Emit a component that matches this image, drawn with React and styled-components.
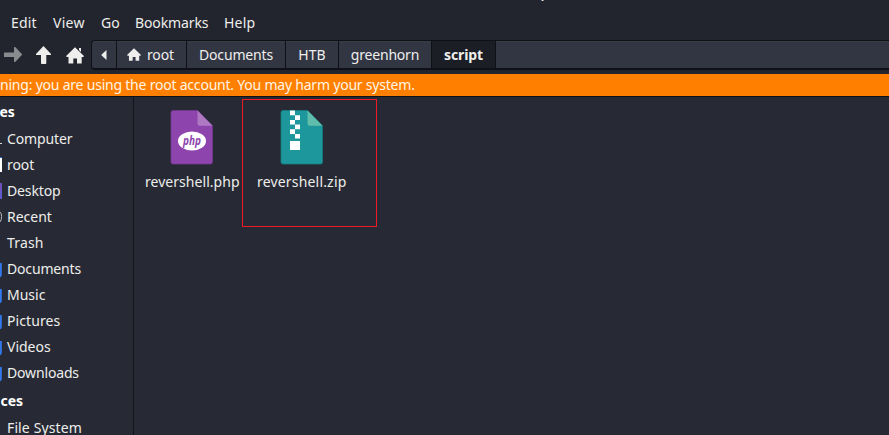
import React from "react";
import styled, { createGlobalStyle } from "styled-components";

const Global = createGlobalStyle`
  * { box-sizing: border-box; }
  html, body { margin: 0; background: #272a34; overflow: hidden; }
  body { font: 14px/20px "Noto Sans", "Open Sans", sans-serif; color: #eeeeec; }
`;

const Window = styled.div`
  width: 889px;
  height: 435px;
  display: flex;
  flex-direction: column;
  overflow: hidden;
  background: #272a34;
  white-space: nowrap;
`;

const TitleBar = styled.header`
  height: 3px;
  flex: none;
  padding-left: 541px;
  background: #23252e;
`;
const TitleTip = styled.span`
  display: block;
  width: 3px;
  height: 1px;
  background: linear-gradient(90deg, #477ca8 33%, #eeeeec 33% 67%, #9d7958 67%);
`;

const MenuBar = styled.nav`
  height: 37px;
  flex: none;
  display: flex;
  padding: 10px 0 0 11px;
  background: #23252e;
`;
const MenuItem = styled.span`
  flex: none;
  width: ${(p) => p.$w}px;
  letter-spacing: ${(p) => p.$ls || 0}px;
`;

const Toolbar = styled.div`
  height: 34px;
  flex: none;
  display: flex;
  background: #23252e;
`;
const Tools = styled.div`
  width: 91px;
  flex: none;
  display: flex;
  align-items: flex-start;
  padding: 5px 0 0 3px;
  gap: 8px;
`;
const PathBar = styled.div`
  flex: 1;
  height: 30px;
  display: flex;
  border: 1px solid #0f1116;
  border-width: 1px 0 2px 1px;
  border-radius: 4px 0 0 4px;
  background: #323643;
  box-shadow: inset 0 1px #393d4a;
`;
const Crumb = styled.div`
  flex: none;
  width: ${(p) => p.$w}px;
  display: flex;
  align-items: center;
  justify-content: center;
  gap: 6px;
  padding-right: ${(p) => p.$pad || 0}px;
  border-right: 1px solid #0f1116;
  letter-spacing: ${(p) => p.$ls || 0}px;
  background: ${(p) => (p.$active ? "#1b1e25" : "transparent")};
  font-weight: ${(p) => (p.$active ? 700 : 400)};
`;

const Warning = styled.div`
  height: 23px;
  flex: none;
  padding-top: 1px;
  border-bottom: 1px solid #101218;
  background: #ff8000;
  color: #fff4e6;
`;
const WarningText = styled.span`
  letter-spacing: -0.215px;
`;

const Body = styled.div`
  flex: 1;
  min-height: 0;
  display: flex;
`;
const Sidebar = styled.aside`
  width: 134px;
  flex: none;
  overflow: hidden;
  border-right: 1px solid #121419;
`;
const Heading = styled.div`
  height: 29px;
  display: flex;
  align-items: center;
  font-weight: 700;
  color: #fff;
  text-indent: ${(p) => p.$x || 0}px;
`;
const Place = styled.div`
  height: 26px;
  display: flex;
  align-items: center;
`;
const PlaceIcon = styled.svg`
  width: 7px;
  height: 26px;
  flex: none;
`;
const PlaceLabel = styled.span`
  letter-spacing: ${(p) => p.$ls || 0}px;
`;

const Files = styled.main`
  flex: 1;
  display: flex;
  align-items: flex-start;
  padding: 2px 0 0 3px;
`;
const FileTile = styled.div`
  flex: none;
  width: ${(p) => p.$w}px;
  height: 128px;
  padding-top: 10px;
  display: flex;
  flex-direction: column;
  align-items: flex-start;
  border: 1px solid ${(p) => (p.$marked ? "#ec1c24" : "transparent")};
`;
const FileIcon = styled.svg`
  width: 44px;
  height: 56px;
  flex: none;
  margin-left: ${(p) => p.$x}px;
`;
const FileName = styled.span`
  margin: 6px 0 0 ${(p) => p.$x}px;
  letter-spacing: ${(p) => p.$ls || 0}px;
`;

const Arrow = ({ up }) => (
  <svg width="22" height="22" viewBox="0 0 22 22">
    <path
      d={up
        ? "M10.5 1L18 9V10H13.3V18Q13.3 19 12.5 19H8.7Q8 19 8 18V10H3V9Z"
        : "M1 7.5H11V2.3Q11 2 11.7 2H12.2L19.3 9.5L12.2 17H11.7Q11 17 11 16.5V12H1Z"}
      fill={up ? "#eeeeec" : "#8a8b8e"}
    />
  </svg>
);

const Home = ({ size = 18, chimney }) => (
  <svg width={size} height={size * 17 / 18} viewBox="0 0 18 17">
    <path d="M9 0.3L17.7 8.8V10H15.7V16.5H11V11.5H7.3V16.5H2.5V10H.4V8.8Z" fill="#eeeeec" />
    {chimney && <path d="M13 1H15V5L13 3Z" fill="#eeeeec" />}
  </svg>
);

const HomeButton = styled.div`
  padding-top: 2px;
  margin-left: 3px;
`;

const Tri = () => (
  <svg width="6" height="10" viewBox="0 0 6 10">
    <path d="M5.5 0V10L.4 5.3V4.7Z" fill="#eeeeec" />
  </svg>
);

const marks = {
  computer: <path d="M0 17.5H2" stroke="#d9dade" />,
  home: <g><path d="M0 6H2V20H0Z" fill="#fff" /><path d="M0 5.5H1.5" stroke="#3b78e7" /></g>,
  desktop: <g><path d="M0 5H2V21H0Z" fill="#7050bd" /><path d="M0 13H2V21H0Z" fill="#5f59ca" /></g>,
  recent: <path d="M0 8Q1.6 9 1.6 12.5T0 18" fill="none" stroke="#b9babd" />,
  folder: <path d="M0 7H1.8V19L1 21H0Z" fill="#3179ef" />,
};

const places = [
  ["Computer", "computer", -0.14],
  ["root", "home", -0.1],
  ["Desktop", "desktop", -0.14],
  ["Recent", "recent", 0],
  ["Trash", null, 0.15],
  ["Documents", "folder", -0.16],
  ["Music", "folder", 0],
  ["Pictures", "folder", 0.1],
  ["Videos", "folder", 0],
  ["Downloads", "folder", -0.16],
];

const Row = ({ label, icon, spacing }) => (
  <Place>
    <PlaceIcon viewBox="0 0 7 26">{marks[icon]}</PlaceIcon>
    <PlaceLabel $ls={spacing}>{label}</PlaceLabel>
  </Place>
);

const Sheet = ({ color, fold, edge }) => (
  <g>
    <path d="M3 .5H27.5L42.5 15.8V52Q42.5 54 40.5 54H3Q1 54 1 52V2.5Q1 .5 3 .5Z" fill={color} stroke={edge} strokeWidth=".8" />
    <path d="M27.5 .5L42.5 15.8H29.5Q27.5 15.8 27.5 13.8Z" fill={fold} />
  </g>
);

export default function App() {
  return (
    <Window>
      <Global />
      <TitleBar><TitleTip /></TitleBar>
      <MenuBar>
        <MenuItem $w={42} $ls={0.2}>Edit</MenuItem>
        <MenuItem $w={48} $ls={0.25}>View</MenuItem>
        <MenuItem $w={34}>Go</MenuItem>
        <MenuItem $w={89} $ls={-0.12}>Bookmarks</MenuItem>
        <MenuItem $w={40} $ls={0.2}>Help</MenuItem>
      </MenuBar>
      <Toolbar>
        <Tools>
          <Arrow />
          <Arrow up />
          <HomeButton><Home chimney /></HomeButton>
        </Tools>
        <PathBar>
          <Crumb $w={25}><Tri /></Crumb>
          <Crumb $w={70} $pad={2} $ls={-0.1}><Home size={14} />root</Crumb>
          <Crumb $w={99} $ls={-0.14}>Documents</Crumb>
          <Crumb $w={53}>HTB</Crumb>
          <Crumb $w={93} $ls={-0.2}>greenhorn</Crumb>
          <Crumb $w={64} $ls={-0.1} $active>script</Crumb>
        </PathBar>
      </Toolbar>
      <Warning><WarningText>ning: you are using the root account. You may harm your system.</WarningText></Warning>
      <Body>
        <Sidebar>
          <Heading $x={-0.5}>es</Heading>
          {places.map(([label, icon, spacing]) => (
            <Row key={label} label={label} icon={icon} spacing={spacing} />
          ))}
          <Heading $x={0.5}>ces</Heading>
          <Row label="File System" spacing={0.12} />
        </Sidebar>
        <Files>
          <FileTile $w={105}>
            <FileIcon $x={32} viewBox="0 0 44 56">
              <Sheet color="#8e44ad" fold="#ae79c2" edge="#743890" />
              <ellipse cx="22" cy="31" rx="14" ry="9.5" fill="#fff" />
              <text x="22" y="34.5" textAnchor="middle" fontFamily="Noto Sans, sans-serif" fontSize="12" fontWeight="700" fontStyle="italic" textLength="18" lengthAdjust="spacingAndGlyphs" fill="#8e44ad">php</text>
            </FileIcon>
            <FileName $x={7} $ls={0.04}>revershell.php</FileName>
          </FileTile>
          <FileTile $w={135} $marked>
            <FileIcon $x={37} viewBox="0 0 44 56">
              <Sheet color="#1d979b" fold="#60bdac" edge="#147d81" />
              <path d="M10 .5H15V5.2H20V10H15V14.6H20V19.3H15V24H20V28.6H15V24H10V19.3H15V14.6H10V10H15V5.2H10ZM10 31H20V40H10Z" fill="#fff" />
            </FileIcon>
            <FileName $x={14} $ls={0.18}>revershell.zip</FileName>
          </FileTile>
        </Files>
      </Body>
    </Window>
  );
}
